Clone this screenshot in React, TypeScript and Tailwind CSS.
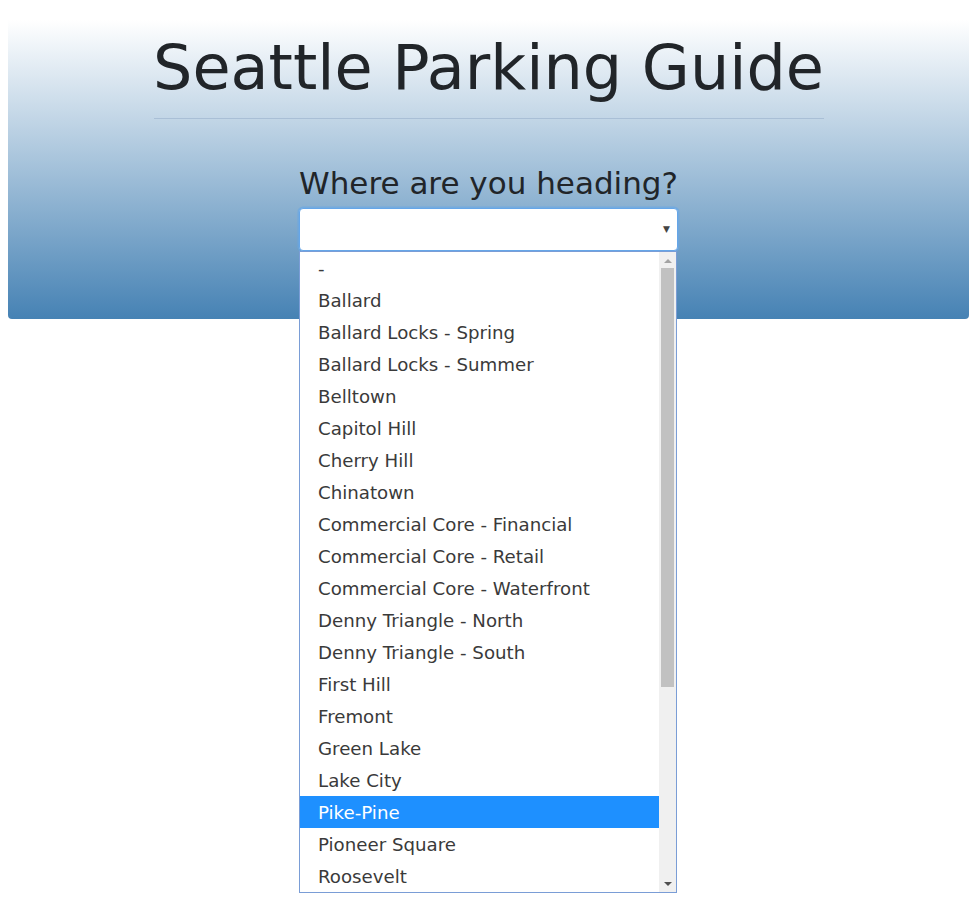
import React from "react";

const items = [
  "-",
  "Ballard",
  "Ballard Locks - Spring",
  "Ballard Locks - Summer",
  "Belltown",
  "Capitol Hill",
  "Cherry Hill",
  "Chinatown",
  "Commercial Core - Financial",
  "Commercial Core - Retail",
  "Commercial Core - Waterfront",
  "Denny Triangle - North",
  "Denny Triangle - South",
  "First Hill",
  "Fremont",
  "Green Lake",
  "Lake City",
  "Pike-Pine",
  "Pioneer Square",
  "Roosevelt",
];

export default function App() {
  return (
    <div className="relative min-h-[905px] bg-white font-['DejaVu_Sans',sans-serif]">
      <div className="px-2 pt-5">
        <div className="h-[299px] rounded-b-[4px] bg-[linear-gradient(to_bottom,#ffffff_0%,#4682b4_100%)] flex flex-col items-center">
          <div className="w-[670px] flex flex-col items-center border-b border-[#a9bfd6] pb-[14px] pt-[11px]">
            <h1 className="whitespace-nowrap text-[62px] leading-[73px] text-[#212529] font-normal">Seattle Parking Guide</h1>
          </div>
          <div className="mt-[46px] whitespace-nowrap text-[31px] leading-[36px] text-[#212529]">Where are you heading?</div>
          <div className="relative mt-[7px] h-[43px] w-[379px] rounded-[4px] border border-[#66a6e8] bg-white shadow-[0_0_0_1.5px_rgba(102,166,232,0.6)]">
            <span className="absolute right-[7px] top-[14px] text-[9px] text-[#444]">▼</span>
          </div>
        </div>
      </div>
      <div className="absolute left-[299px] top-[251px] w-[378px] h-[642px] border border-[#7a9dd6] bg-white flex">
        <div className="flex-1 flex flex-col">
          {items.map((it) => (
            <div
              key={it}
              className={
                it === "Pike-Pine"
                  ? "h-[32px] pl-[18px] pt-[2px] flex items-center text-[18.2px] bg-[#1e90ff] text-white"
                  : "h-[32px] pl-[18px] pt-[2px] flex items-center text-[18.2px] text-[#3a3a3a]"
              }
            >
              {it}
            </div>
          ))}
        </div>
        <div className="w-[17px] bg-[#f0f0f0] flex flex-col items-center">
          <div className="h-[16px] flex items-center justify-center">
            <svg width="8" height="5" viewBox="0 0 8 5"><path d="M0 5 L4 1 L8 5 Z" fill="#a3a3a3" /></svg>
          </div>
          <div className="w-[13px] h-[419px] bg-[#c1c1c1]" />
          <div className="flex-1" />
          <div className="h-[16px] flex items-center justify-center">
            <svg width="8" height="5" viewBox="0 0 8 5"><path d="M0 0 L8 0 L4 4 Z" fill="#505050" /></svg>
          </div>
        </div>
      </div>
    </div>
  );
}
